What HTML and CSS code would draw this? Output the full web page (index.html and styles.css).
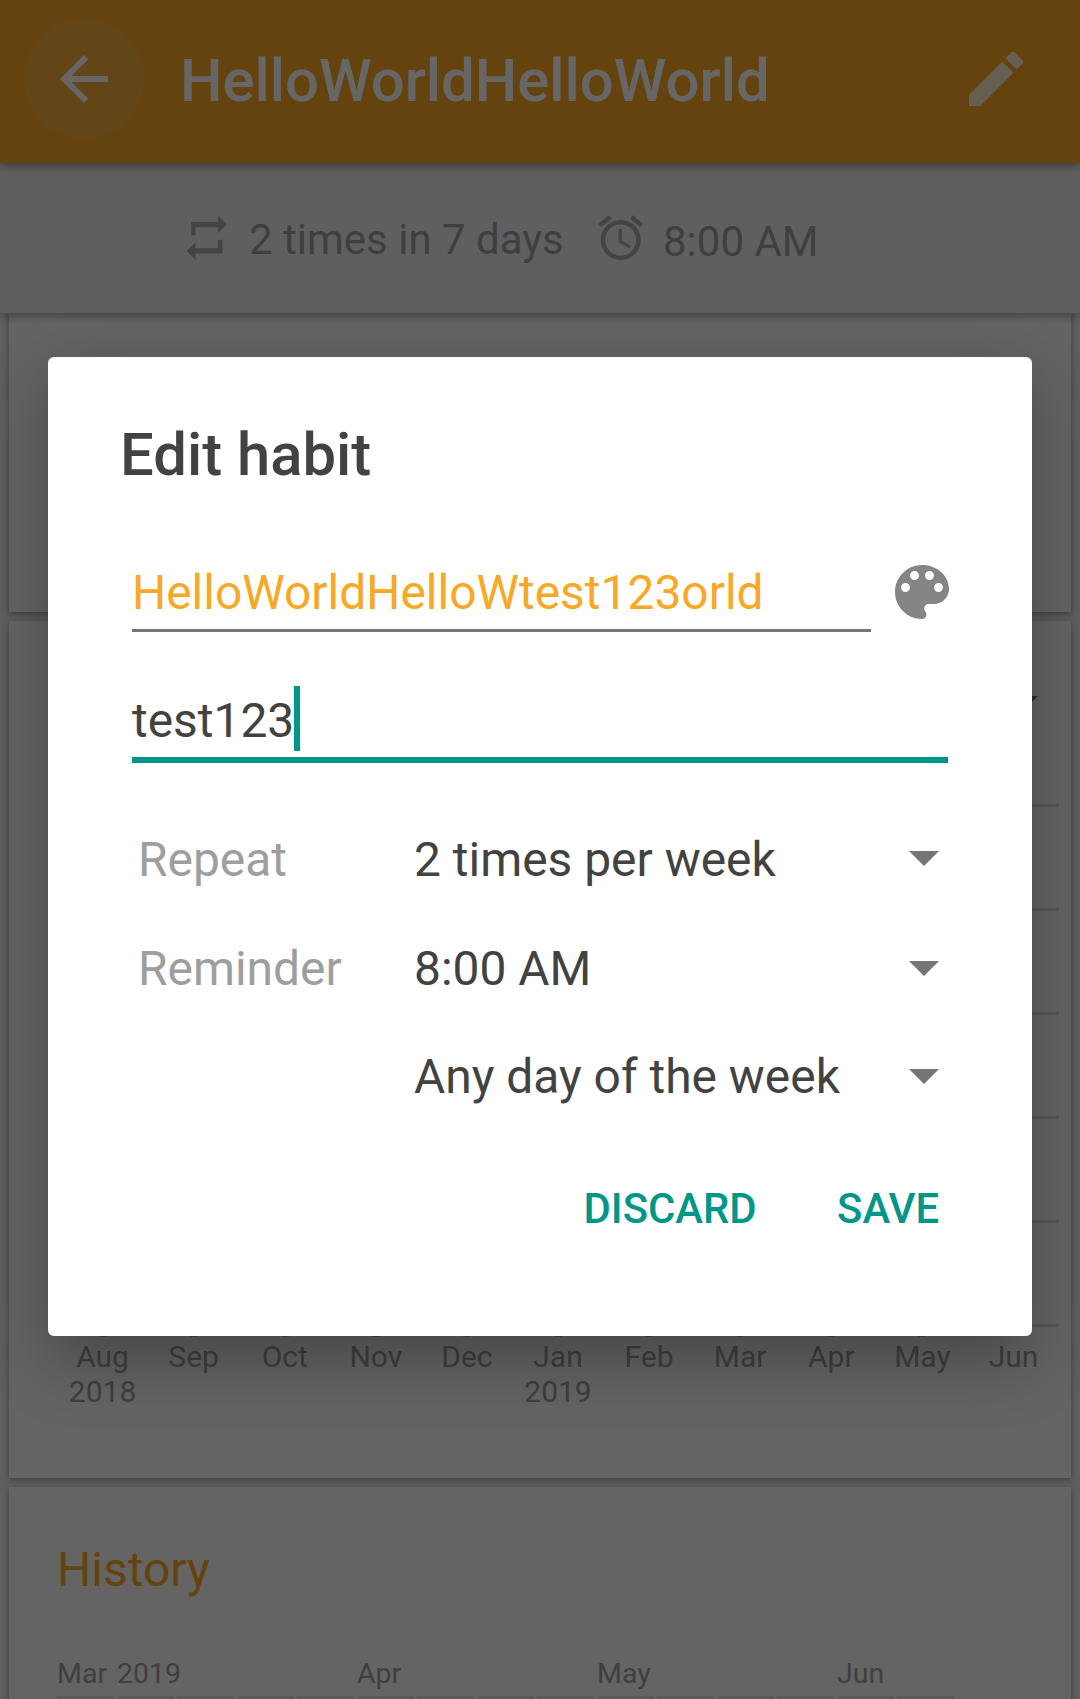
FILE: index.html
```html
<!DOCTYPE html>
<html lang="en">
<head>
<meta charset="utf-8">
<title>Edit habit</title>
<link rel="stylesheet" href="styles.css">
</head>
<body>
<div class="screen">
  <header class="toolbar">
    <div class="back"><svg class="icon" viewBox="0 0 24 24"><path d="M20 11H7.83l5.59-5.59L12 4l-8 8 8 8 1.41-1.41L7.83 13H20v-2z"/></svg></div>
    <h1 class="toolbar-title">HelloWorldHelloWorld</h1>
    <svg class="icon edit" viewBox="0 0 24 24"><path d="M3 17.25V21h3.75L17.81 9.94l-3.75-3.75L3 17.25zM20.71 7.04a1 1 0 0 0 0-1.41l-2.34-2.34a1 1 0 0 0-1.41 0l-1.83 1.83 3.75 3.75 1.83-1.83z"/></svg>
  </header>

  <div class="summary">
    <div class="summary-item frequency">
      <svg class="small-icon" viewBox="0 0 24 24"><path d="M7 7.3h10V10l4-4-4-4v2.9H5V11h2V7.3zm10 9.4H7V14l-4 4 4 4v-2.9h12V13h-2v3.7z"/></svg>
      <span>2 times in 7 days</span>
    </div>
    <div class="summary-item time">
      <svg class="small-icon" viewBox="0 0 24 24"><path d="M22 5.72l-4.6-3.86-1.29 1.53 4.6 3.86L22 5.72zM7.88 3.39L6.6 1.86 2 5.71l1.29 1.53 4.59-3.85zM12.5 8H11v6l4.75 2.85.75-1.23-4-2.37V8zM12 4c-4.97 0-9 4.03-9 9s4.02 9 9 9c4.97 0 9-4.03 9-9s-4.03-9-9-9zm0 16c-3.87 0-7-3.13-7-7s3.13-7 7-7 7 3.13 7 7-3.13 7-7 7z"/></svg>
      <span>8:00 AM</span>
    </div>
  </div>

  <main class="cards">
    <section class="card overview"></section>

    <section class="card score">
      <svg class="interval" viewBox="0 0 36 18"><path d="M0 0h36L18 18z"/></svg>
      <div class="plot"><i></i><i></i><i></i><i></i><i></i><i></i></div>
      <div class="months">
        <div class="month"><b class="dot"></b>Aug<br>2018</div>
        <div class="month"><b class="dot"></b>Sep</div>
        <div class="month"><b class="dot"></b>Oct</div>
        <div class="month"><b class="dot"></b>Nov</div>
        <div class="month"><b class="dot"></b>Dec</div>
        <div class="month"><b class="dot"></b>Jan<br>2019</div>
        <div class="month"><b class="dot"></b>Feb</div>
        <div class="month"><b class="dot"></b>Mar</div>
        <div class="month"><b class="dot"></b>Apr</div>
        <div class="month"><b class="dot"></b>May</div>
        <div class="month"><b class="dot none"></b>Jun</div>
      </div>
    </section>

    <section class="card history">
      <h2 class="card-title">History</h2>
      <div class="calendar">
        <span>Mar</span><span>2019</span><span></span><span></span><span></span><span>Apr</span><span></span><span></span><span></span><span>May</span><span></span><span></span><span></span><span>Jun</span><span></span>
        <i></i><i></i><i></i><i></i><i></i><i></i><i></i><i></i><i></i><i></i><i></i><i></i><i></i><i></i><i></i>
      </div>
    </section>
  </main>

  <div class="scrim">
    <div class="dialog">
      <h2 class="dialog-title">Edit habit</h2>
      <div class="name-row">
        <div class="field name">HelloWorldHelloWtest123orld</div>
        <svg class="icon palette" viewBox="0 0 24 24"><path d="M12 3c-4.97 0-9 4.03-9 9s4.03 9 9 9c.83 0 1.5-.67 1.5-1.5 0-.39-.15-.74-.39-1.01-.23-.26-.38-.61-.38-.99 0-.83.67-1.5 1.5-1.5H16c2.76 0 5-2.24 5-5 0-4.42-4.03-8-9-8zm-5.5 9c-.83 0-1.5-.67-1.5-1.5S5.67 9 6.5 9 8 9.67 8 10.5 7.33 12 6.5 12zm3-4C8.67 8 8 7.33 8 6.5S8.67 5 9.5 5s1.5.67 1.5 1.5S10.33 8 9.5 8zm5 0c-.83 0-1.5-.67-1.5-1.5S13.67 5 14.5 5s1.5.67 1.5 1.5S15.33 8 14.5 8zm3 4c-.83 0-1.5-.67-1.5-1.5S16.67 9 17.5 9s1.5.67 1.5 1.5-.67 1.5-1.5 1.5z"/></svg>
      </div>
      <div class="field question"><span>test123</span><span class="caret"></span></div>
      <div class="options">
        <div class="option"><span class="label">Repeat</span><span class="value">2 times per week</span><svg class="arrow" viewBox="0 0 30 15"><path d="M0 0h30L15 15z"/></svg></div>
        <div class="option"><span class="label">Reminder</span><span class="value">8:00 AM</span><svg class="arrow" viewBox="0 0 30 15"><path d="M0 0h30L15 15z"/></svg></div>
        <div class="option"><span class="label"></span><span class="value">Any day of the week</span><svg class="arrow" viewBox="0 0 30 15"><path d="M0 0h30L15 15z"/></svg></div>
      </div>
      <div class="actions"><span>DISCARD</span><span>SAVE</span></div>
    </div>
  </div>
</div>
</body>
</html>
```
FILE: styles.css
```css
* { box-sizing: border-box; }
body { margin: 0; font-family: Roboto, "Liberation Sans", sans-serif; }
h1, h2 { margin: 0; font-weight: 500; }
svg { display: block; flex: none; fill: currentColor; }

.screen {
  position: relative;
  width: 1080px;
  height: 1699px;
  overflow: hidden;
  background: #ededed;
}

.icon { width: 72px; height: 72px; }

.toolbar {
  position: relative;
  z-index: 2;
  display: flex;
  align-items: center;
  height: 163px;
  padding: 0 48px 5px 24px;
  background: #f9a825;
  color: #fff;
  box-shadow: 0 3px 9px rgba(0, 0, 0, .4);
}
.back {
  display: flex;
  align-items: center;
  justify-content: center;
  width: 120px;
  height: 120px;
  border-radius: 50%;
  background: rgba(238, 238, 238, .12);
}
.toolbar-title {
  flex: 1;
  margin: 4px 0 0 36px;
  font-size: 59.85px;
  line-height: 72px;
}
.edit { opacity: .8; }

.summary {
  position: relative;
  z-index: 1;
  display: flex;
  align-items: center;
  height: 150px;
  padding-left: 180px;
  background: #ededed;
  color: #9e9e9e;
  font-size: 42px;
  line-height: 50px;
  box-shadow: 0 3px 9px rgba(0, 0, 0, .35);
}
.summary-item { display: flex; align-items: center; gap: 15.5px; }
.frequency { width: 414px; }
.frequency span { margin-top: 4px; }
.time span { margin-top: 7px; }
.small-icon { width: 53.5px; height: 53.5px; color: #aaa; }

.cards {
  display: flex;
  flex-direction: column;
  gap: 9px;
  padding: 0 9px;
}
.card {
  background: #fafafa;
  box-shadow: 0 2px 6px rgba(0, 0, 0, .35);
}
.overview { height: 299px; }
.score { height: 857px; padding: 75px 12px 0 48px; }
.interval { width: 36px; height: 18px; margin: 0 21px 90px auto; color: #757575; }
.plot { height: 523px; display: flex; flex-direction: column; gap: 101px; }
.plot i { height: 3px; background: #dcdcdc; }
.months {
  display: grid;
  grid-template-columns: repeat(11, 91.1px);
  margin-top: -14px;
  color: #9e9e9e;
  font-size: 30px;
  line-height: 35px;
  text-align: center;
}
.dot { display: block; width: 24px; height: 24px; margin: 0 auto 2px; border-radius: 50%; background: #f9a825; }
.dot.none { background: none; }

.history { height: 260px; padding: 55px 48px 0; }
.card-title { color: #f9a825; font-size: 48px; font-weight: 400; line-height: 56px; }
.calendar {
  display: grid;
  grid-template-columns: repeat(15, 57px);
  grid-template-rows: 36px 57px;
  gap: 3px;
  margin-top: 59px;
  color: #9e9e9e;
  font-size: 28.5px;
  line-height: 33px;
}
.calendar i { background: #e0e0e0; }

.scrim {
  position: absolute;
  inset: 0;
  z-index: 3;
  padding: 357px 48px 0;
  background: rgba(0, 0, 0, .6);
}
.dialog {
  height: 979px;
  padding: 63px 84px 0;
  border-radius: 6px;
  background: #fff;
  color: #424242;
  font-size: 47.93px;
  box-shadow: 0 24px 66px rgba(0, 0, 0, .3);
}
.dialog-title { margin-left: -12px; font-size: 59.8px; line-height: 70px; }
.name-row { display: flex; justify-content: space-between; height: 76px; margin: 66px -10px 0 0; }
.name { width: 739px; margin-top: 4px; padding-bottom: 2px; border-bottom: 3px solid #757575; color: #f9a825; line-height: 67px; }
.palette { color: #858585; }
.question { display: flex; height: 77px; margin-top: 54px; border-bottom: 6px solid #009688; line-height: 71px; }
.caret { width: 6px; height: 65px; margin-left: -.5px; background: #009688; }

.options { display: grid; grid-template-rows: 109px 109px 108px; margin-top: 42px; }
.option { display: flex; align-items: center; padding: 0 9px 0 6px; line-height: 56px; }
.label { width: 276px; color: #9e9e9e; }
.value { flex: 1; }
.arrow { width: 30px; height: 15px; color: #757575; }
.option:not(:nth-child(2)) .arrow { margin-bottom: 2px; }

.actions {
  display: flex;
  justify-content: flex-end;
  gap: 80.5px;
  margin-top: 42px;
  padding-right: 9px;
  color: #009688;
  font-size: 41.8px;
  font-weight: 500;
  line-height: 71px;
}
```
